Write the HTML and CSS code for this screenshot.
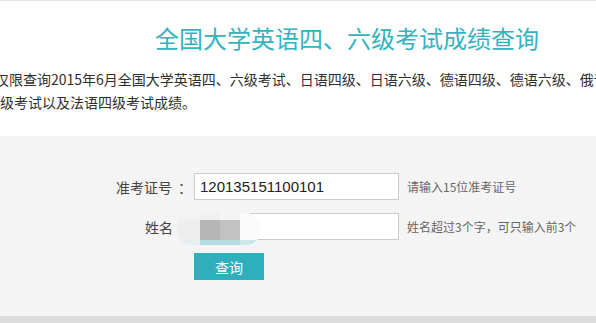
FILE: index.html
```html
<!DOCTYPE html>
<html lang="zh-CN">
<head>
<meta charset="utf-8">
<title>全国大学英语四、六级考试成绩查询</title>
<link rel="stylesheet" href="styles.css">
</head>
<body>
<div class="page">
  <header class="top">
    <h1 class="title">全国大学英语四、六级考试成绩查询</h1>
    <p class="intro">仅限查询2015年6月全国大学英语四、六级考试、日语四级、日语六级、德语四级、德语六级、俄语四级、俄语六<br>级考试以及法语四级考试成绩。</p>
  </header>
  <section class="query">
    <form class="form">
      <label class="label" for="zkzh">准考证号<span class="colon">：</span></label>
      <input class="field" id="zkzh" type="text" value="120135151100101">
      <span class="hint">请输入15位准考证号</span>

      <label class="label label-name" for="xm">姓名</label>
      <div class="field-wrap">
        <input class="field" id="xm" type="text" value="">
        <div class="mask">
          <span class="m m1"></span><span class="m m2"></span><span class="m m3"></span><span class="m m4"></span>
          <span class="m m5"></span><span class="m m6"></span><span class="m m7"></span><span class="m m8"></span>
          <span class="m m9"></span><span class="m m10"></span><span class="m m11"></span><span class="m m12"></span>
        </div>
      </div>
      <span class="hint">姓名超过3个字，可只输入前3个</span>

      <span class="spacer"></span>
      <button class="btn" type="button">查询</button>
    </form>
  </section>
  <div class="bottom-bar"></div>
</div>
</body>
</html>
```

FILE: styles.css
```css
html, body {
  margin: 0;
  padding: 0;
  background: #ffffff;
}
body {
  font-family: "Noto Sans CJK SC", "Microsoft YaHei", sans-serif;
  overflow: hidden;
}
.page {
  width: 596px;
  overflow: hidden;
}
.top {
  height: 135px;
  border-top: 1px solid #e4e4e4;
  background: #ffffff;
  overflow: hidden;
}
.title {
  margin: 0;
  padding: 25px 0 0 155px;
  font-size: 24px;
  line-height: 24px;
  font-weight: normal;
  color: #34b3bf;
  white-space: nowrap;
}
.intro {
  margin: 18px 0 0 0;
  font-size: 14px;
  line-height: 23px;
  color: #2e2e2e;
  white-space: nowrap;
  text-indent: -5px;
}
.query {
  height: 143px;
  padding-top: 37px;
  background: #f4f4f4;
}
.form {
  display: grid;
  grid-template-columns: 186px 205px auto;
  grid-auto-rows: 27px;
  column-gap: 8px;
  row-gap: 13px;
  align-items: center;
}
.label {
  justify-self: end;
  font-size: 14px;
  color: #444444;
}
.colon {
  display: inline-block;
  padding-left: 6px;
  margin-right: -6px;
}
.label-name {
  padding-right: 13px;
}
.field-wrap {
  position: relative;
  height: 27px;
}
.field {
  box-sizing: border-box;
  width: 205px;
  height: 27px;
  margin: 0;
  padding: 0 5px;
  border: 1px solid #cccccc;
  background: #ffffff;
  font-family: "Liberation Sans", Arial, sans-serif;
  font-size: 15px;
  color: #222222;
  outline: none;
}
.hint {
  font-size: 12px;
  color: #666666;
  white-space: nowrap;
}
.mask {
  position: absolute;
  left: -17px;
  top: 0;
  width: 83px;
  height: 32px;
  display: grid;
  grid-template-columns: 23px 20px 20px 20px;
  grid-template-rows: 7px 20px 5px;
  border-radius: 14px;
  overflow: hidden;
  background: #f6f6f6;
}
.m1 { background: #f3f3f3; }
.m2 { background: #f0f0f0; }
.m3 { background: #f4f4f4; }
.m4 { background: #fbfbfb; }
.m5 { background: #eeeeee; }
.m6 { background: #b6b6b6; }
.m7 { background: #c2c2c2; }
.m8 { background: #fafafa; }
.m9 { background: #e4efef; }
.m10 { background: #b3dde2; }
.m11 { background: #b3dde2; }
.m12 { background: #c9e8eb; }
.spacer {
  display: block;
}
.btn {
  width: 70px;
  height: 27px;
  margin: 0;
  padding: 0;
  border: none;
  background: #2eafbb;
  color: #ffffff;
  font-family: "Noto Sans CJK SC", "Microsoft YaHei", sans-serif;
  font-size: 14px;
  cursor: pointer;
}
.bottom-bar {
  height: 7px;
  background: #dcdcdc;
}
```
